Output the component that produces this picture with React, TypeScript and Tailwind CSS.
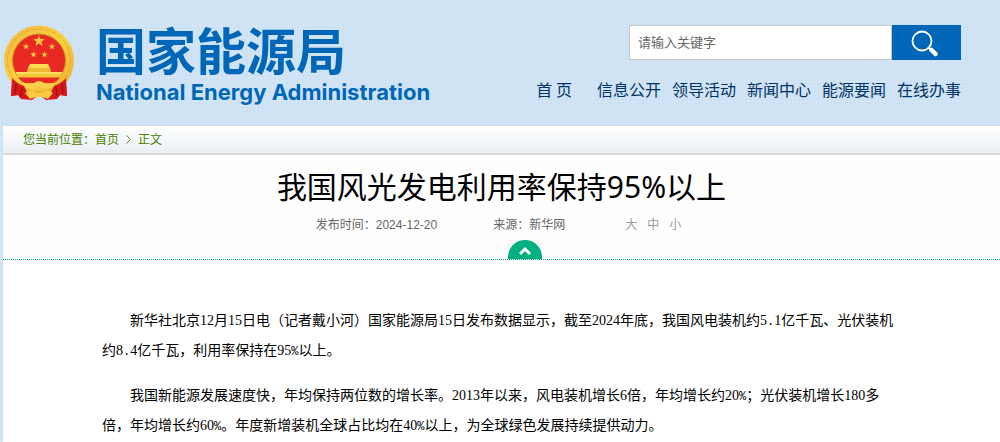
const NAV = ['信息公开', '领导活动', '新闻中心', '能源要闻', '在线办事'];

const PARAGRAPHS = [
  '新华社北京12月15日电（记者戴小河）国家能源局15日发布数据显示，截至2024年底，我国风电装机约5.1亿千瓦、光伏装机约8.4亿千瓦，利用率保持在95%以上。',
  '我国新能源发展速度快，年均保持两位数的增长率。2013年以来，风电装机增长6倍，年均增长约20%；光伏装机增长180多倍，年均增长约60%。年度新增装机全球占比均在40%以上，为全球绿色发展持续提供动力。',
];

/* Decimal points and percent signs take the same half-width cell as the digits. */
function Paragraph({ text }: { text: string }) {
  return (
    <p className="indent-7">
      {text.split(/([.%])/).map((part, i) =>
        i % 2 ? (
          <span key={i} className="font-['Liberation_Mono',monospace] text-xs leading-none">{part}</span>
        ) : (
          part
        ),
      )}
    </p>
  );
}

function Emblem() {
  const star = 'M0-6 1.5-1.9 5.8-1.8 2.4.8 3.6 4.9 0 2.5-3.6 4.9-2.4.8-5.8-1.8-1.5-1.9Z';
  return (
    <svg viewBox="0 0 72 76" className="h-[76px] w-[72px] shrink-0" role="img" aria-label="国徽">
      <defs>
        <linearGradient id="gold" x1="0" y1="0" x2="1" y2="1">
          <stop offset="0" stopColor="#eeb540" />
          <stop offset=".5" stopColor="#fbd240" />
          <stop offset="1" stopColor="#e9ac30" />
        </linearGradient>
      </defs>
      <path d="M10 50 8 71 15 70 18 74 29 75 36 70 43 75 54 74 57 70 64 71 62 50Z" fill="#d8191b" />
      <circle cx="36" cy="35.500" r="35" fill="url(#gold)" />
      <circle cx="36" cy="35.500" r="31.500" fill="none" stroke="#e2a534" strokeWidth="1" strokeDasharray="5 2" />
      <circle cx="36" cy="35.500" r="26.500" fill="#e92a22" stroke="#d08c25" strokeWidth="1" />
      <path d="M14 50.500Q20 62 36 62 52 62 58 50.500V47H14Z" fill="#f5c838" />
      <path d="M13 48H59" stroke="#ffdd60" strokeWidth="2" />
      <path d="M25 43H47L48 47H24Z" fill="#efb936" />
      <path d="M25 43H47L45 39H27Z" fill="#ffd94e" />
      <path d="M15 52.500H57L52 58H20Z" fill="#e92a22" />
      <g fill="#f5c642">
        <path d={star} transform="translate(36 16)" />
        <path d={star} transform="translate(23 21.500) scale(.56)" />
        <path d={star} transform="translate(49 21.500) scale(.56)" />
        <path d={star} transform="translate(30.500 29.500) scale(.56)" />
        <path d={star} transform="translate(41.500 29.500) scale(.56)" />
      </g>
      <path d="M9 53Q13 58 21 61L24 67 19 74 15 70 8 71Z M63 53Q59 58 51 61L48 67 53 74 57 70 64 71Z" fill="#d8191b" />
      <path d="M13 59 12 69M19 62 18 71M59 59 60 69M53 62 54 71" stroke="#a31112" strokeWidth="1.500" />
      <path d="M19 56Q27 63 31 58 36 54 41 58 45 63 53 56 49 65 41 64 36 61 31 64 23 65 19 56Z" fill="#f8d04a" />
      <path d="M22 68Q27 63 32 67 36 70 40 67 45 63 50 68L45 74Q36 70 27 74Z" fill="#f8cb40" />
    </svg>
  );
}

export default function App() {
  return (
    <div className="min-h-screen bg-[#cde1f4] bg-[repeating-linear-gradient(0deg,#ffffff20_0_1px,transparent_1px_4px),repeating-linear-gradient(90deg,#ffffff20_0_1px,transparent_1px_4px)] pl-[3px] font-['Liberation_Sans','Noto_Sans_CJK_SC',sans-serif]">
      <header className="flex h-[125px] items-start justify-between pr-[39px]">
        <div className="flex items-start">
          <div className="pt-[25px]">
            <Emblem />
          </div>
          <div className="pt-[22px] pl-[21px] font-bold text-[#0067b8]">
            <div className="font-['Noto_Sans_CJK_SC',sans-serif] text-[50px] leading-[52px]">国家能源局</div>
            <div className="pt-[6px] font-['Inter',sans-serif] text-[22px] leading-6">National Energy Administration</div>
          </div>
        </div>
        <div className="flex flex-col items-end pt-[25px]">
          <form className="flex h-[35px]" onSubmit={(e) => e.preventDefault()}>
            <input
              type="text"
              aria-label="请输入关键字"
              placeholder="请输入关键字"
              className="w-[263px] border border-[#c8c8c8] bg-white px-2 text-[13px] text-[#666] outline-none placeholder:text-[#666]"
            />
            <button type="submit" aria-label="搜索" className="flex w-[69px] items-center justify-center bg-[#0067b8]">
              <svg viewBox="0 0 28 28" className="-ml-1 size-7" fill="none" stroke="#fff">
                <circle cx="11" cy="12" r="9.500" strokeWidth="1.800" />
                <path d="M17.500 18.500 19.500 20.500" strokeWidth="2" />
                <path d="M20.500 21 24.500 25" strokeWidth="4.500" strokeLinecap="round" />
              </svg>
            </button>
          </form>
          <nav className="flex gap-[11px] pt-[17px] font-['Noto_Sans_CJK_SC',sans-serif] text-base leading-6 text-[#003366]">
            <a href="#home" className="pr-[14px]">首 页</a>
            {NAV.map((item) => (
              <a key={item} href={'#' + item}>{item}</a>
            ))}
          </nav>
        </div>
      </header>
      <main className="min-h-[317px] bg-white">
        <nav className="flex h-[30px] items-center gap-[7px] border-t border-b-2 border-t-[#d5dbe2] border-b-[#d8dadd] bg-linear-to-b from-white to-[#eaeef3] pl-5 text-xs text-[#478000]">
          <span>您当前位置：<a href="#home">首页</a></span>
          <svg viewBox="0 0 5 10" className="h-[9px] w-[5px]" fill="none" stroke="currentColor">
            <path d="M.5.5 4.500 5 .5 9.500" />
          </svg>
          <a href="#article">正文</a>
        </nav>
        <article>
          <div className="border-b border-dotted border-[#00a880] bg-[#fefefe]">
            <h1 className="pt-3 text-center font-['Noto_Sans','Noto_Sans_CJK_SC',sans-serif] text-[30px] leading-10 text-black">
              我国风光发电利用率保持95%以上
            </h1>
            <div className="flex justify-center pt-[10px] pr-[6px] text-xs leading-4 text-[#666]">
              <span>发布时间：2024-12-20</span>
              <span className="pl-14">来源：新华网</span>
              <span className="flex gap-[10px] pl-[60px] text-[#999]">
                <button type="button">大</button>
                <button type="button">中</button>
                <button type="button">小</button>
              </span>
            </div>
            <div className="flex justify-center pt-[7px] pl-[46px]">
              <button type="button" aria-label="收起" className="block bg-[#f7f7f7]">
                <svg viewBox="0 0 34 19" className="block h-[19px] w-[34px]">
                  <path d="M0 19V17A17 17 0 0 1 34 17V19Z" fill="#00b083" />
                  <path d="M12 14 17 9 22 14" fill="none" stroke="#fff" strokeWidth="3" />
                </svg>
              </button>
            </div>
          </div>
          <div className="flex flex-col gap-[15px] px-[99px] pt-[46px] font-['Liberation_Serif','Noto_Sans_CJK_SC',serif] text-sm leading-[30px] text-black">
            {PARAGRAPHS.map((text) => (
              <Paragraph key={text} text={text} />
            ))}
          </div>
        </article>
      </main>
    </div>
  );
}
